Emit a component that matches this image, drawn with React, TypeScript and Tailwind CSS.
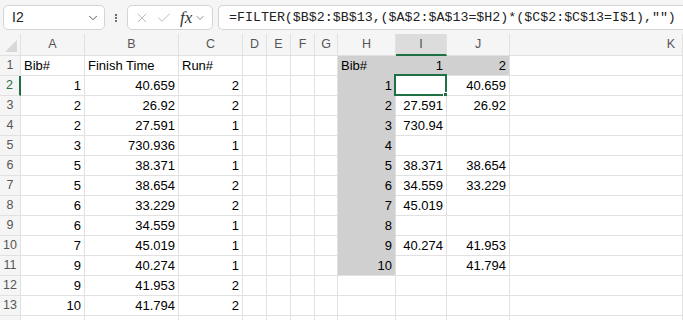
import { Check, ChevronDown, EllipsisVertical, X } from "lucide-react";

const COLS = ["A", "B", "C", "D", "E", "F", "G", "H", "I", "J", "K"];

// each row: A..K values
const rows: string[][] = [
  ["Bib#", "Finish Time", "Run#", "", "", "", "", "Bib#", "1", "2", ""],
  ["1", "40.659", "2", "", "", "", "", "1", "", "40.659", ""],
  ["2", "26.92", "2", "", "", "", "", "2", "27.591", "26.92", ""],
  ["2", "27.591", "1", "", "", "", "", "3", "730.94", "", ""],
  ["3", "730.936", "1", "", "", "", "", "4", "", "", ""],
  ["5", "38.371", "1", "", "", "", "", "5", "38.371", "38.654", ""],
  ["5", "38.654", "2", "", "", "", "", "6", "34.559", "33.229", ""],
  ["6", "33.229", "2", "", "", "", "", "7", "45.019", "", ""],
  ["6", "34.559", "1", "", "", "", "", "8", "", "", ""],
  ["7", "45.019", "1", "", "", "", "", "9", "40.274", "41.953", ""],
  ["9", "40.274", "1", "", "", "", "", "10", "", "41.794", ""],
  ["9", "41.953", "2", "", "", "", "", "", "", "", ""],
  ["10", "41.794", "2", "", "", "", "", "", "", "", ""],
  ["", "", "", "", "", "", "", "", "", "", ""],
];

const isText = (v: string) => v !== "" && isNaN(Number(v));

function isFilled(r: number, c: number) {
  // H1:H11 and I1:J1
  if (c === 7 && r <= 10) return true;
  if (r === 0 && (c === 8 || c === 9)) return true;
  return false;
}

function Cell({ r, c, v }: { r: number; c: number; v: string }) {
  const filled = isFilled(r, c);
  const selected = r === 1 && c === 8;
  const filledRight = filled && isFilled(r, c + 1);
  const filledBelow = filled && isFilled(r + 1, c);
  return (
    <div
      className={`relative flex h-[20px] items-center overflow-visible whitespace-nowrap border-b border-r px-[3px] ${
        isText(v) ? "justify-start" : "justify-end"
      } ${filled ? "bg-[#d0d0d0]" : "bg-white"} ${
        filledRight ? "border-r-[#d0d0d0]" : "border-r-[#e1e1e1]"
      } ${filledBelow ? "border-b-[#d0d0d0]" : "border-b-[#e1e1e1]"}`}
    >
      {v}
      {selected && (
        <div className="absolute -left-[2px] -top-[2px] h-[22px] w-[53px] border-2 border-[#1e7145]">
          <div className="absolute -bottom-[4px] -right-[4px] h-[6px] w-[6px] border border-white bg-[#1e7145]" />
        </div>
      )}
    </div>
  );
}

export default function App() {
  return (
    <div
      className="h-[320px] w-[683px] overflow-hidden bg-[#f5f5f5] text-[13px] text-black"
      style={{ fontFamily: '"Liberation Sans", Arial, sans-serif' }}
    >
      {/* formula bar */}
      <div className="flex h-[34px] items-center gap-[5px] pl-[3px] pt-[1px]">
        <div className="flex h-[25px] w-[102px] items-center justify-between rounded-[5px] border border-[#d4d4d4] bg-white pl-[8px] pr-[4px]">
          <span className="text-[14px] text-[#222]">I2</span>
          <ChevronDown className="h-[14px] w-[14px] text-[#444]" strokeWidth={1.5} />
        </div>
        <EllipsisVertical className="mx-[1px] h-[14px] w-[10px] text-[#444]" strokeWidth={3} />
        <div className="flex h-[25px] w-[86px] items-center rounded-[5px] border border-[#d4d4d4] bg-white pl-[6px] pr-[3px]">
          <X className="h-[16px] w-[16px] text-[#b3b3b3]" strokeWidth={1.3} />
          <Check className="ml-[6px] h-[16px] w-[16px] text-[#b3b3b3]" strokeWidth={1.3} />
          <span
            className="ml-[8px] text-[17px] italic text-[#333]"
            style={{ fontFamily: '"Liberation Serif", "Times New Roman", serif' }}
          >
            fx
          </span>
          <ChevronDown className="ml-[2px] h-[12px] w-[12px] text-[#666]" strokeWidth={1.5} />
        </div>
        <div className="flex h-[25px] flex-1 items-center rounded-l-[5px] border border-r-0 border-[#d4d4d4] bg-white pl-[10px]">
          <span
            className="whitespace-nowrap text-[13.3px] text-[#222]"
            style={{ fontFamily: '"Liberation Mono", "Courier New", monospace' }}
          >
            =FILTER($B$2:$B$13,($A$2:$A$13=$H2)*($C$2:$C$13=I$1),"")
          </span>
        </div>
      </div>

      {/* grid */}
      <div className="grid grid-cols-[21px_64px_94px_64px_24px_24px_24px_23px_58px_51px_63px_1fr]">
        {/* column headers */}
        <div className="flex h-[22px] items-end justify-end border-b border-r border-[#e1e1e1] bg-[#f5f5f5] p-[3px]">
          <div className="h-0 w-0 border-b-[12px] border-l-[12px] border-b-[#d8d8d8] border-l-transparent" />
        </div>
        {COLS.map((col, i) => (
          <div
            key={col}
            className={`flex h-[22px] items-center border-r border-[#e1e1e1] text-[12.5px] ${
              i === 10 ? "justify-end pr-[7px]" : "justify-center"
            } ${
              i === 8
                ? "border-b-2 border-b-[#1e7145] bg-[#dcdcdc] text-[#3d5a48]"
                : "border-b bg-[#f5f5f5] text-[#555]"
            }`}
          >
            {col}
          </div>
        ))}

        {rows.map((row, r) => (
          <div key={r} className="contents">
            <div
              className={`flex h-[20px] items-center justify-center border-b border-[#e1e1e1] bg-[#f5f5f5] text-[12.5px] ${
                r === 1
                  ? "border-r-2 border-r-[#1e7145] text-[#1e7145]"
                  : "border-r text-[#555]"
              }`}
            >
              {r < 13 ? r + 1 : ""}
            </div>
            {row.map((v, c) => (
              <Cell key={c} r={r} c={c} v={v} />
            ))}
          </div>
        ))}
      </div>
    </div>
  );
}
